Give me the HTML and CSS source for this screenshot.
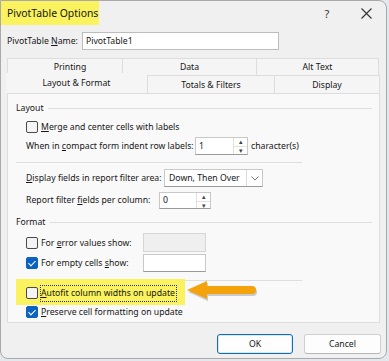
FILE: index.html
```html
<!DOCTYPE html>
<html lang="en">
<head>
  <meta charset="UTF-8" />
  <title>PivotTable Options</title>
  <link rel="stylesheet" href="styles.css">
</head>
<body>

  <div class="dialog">

    <!-- Title bar -->
    <div class="titlebar">
      <span class="title hl">PivotTable Options</span>
      <span class="help">?</span>
      <span class="close">
        <svg width="11" height="11" viewBox="0 0 11 11"><path d="M0.5 0.5 L10.5 10.5 M10.5 0.5 L0.5 10.5" stroke="#333" stroke-width="1.1" fill="none"/></svg>
      </span>
    </div>

    <!-- Name -->
    <div class="name-row">
      <span>PivotTable <u>N</u>ame:</span>
      <div class="field name-box">PivotTable1</div>
    </div>

    <!-- Tabs -->
    <div class="tabs">
      <div class="tab-row">
        <div class="tab w-print">Printing</div>
        <div class="tab w-data">Data</div>
        <div class="tab w-alt">Alt Text</div>
      </div>
      <div class="tab-row">
        <div class="tab active hl">Layout &amp; Format</div>
        <div class="tab w-totals">Totals &amp; Filters</div>
        <div class="tab w-display">Display</div>
      </div>
    </div>

    <!-- Panel -->
    <div class="panel">
      <div class="group-head"><span>Layout</span><span class="rule"></span></div>

      <div class="row r-merge">
        <span class="check"></span>
        <span><u>M</u>erge and center cells with labels</span>
      </div>

      <div class="row r-compact">
        <span class="lbl-compact">When in <u>c</u>ompact form indent row labels:</span>
        <div class="field spin w-indent">
          <span class="val">1</span>
          <span class="spin-btns"><span class="up">&#9652;</span><span class="down">&#9662;</span></span>
        </div>
        <span>character(s)</span>
      </div>

      <div class="sep"></div>

      <div class="row r-display">
        <span class="lbl-display"><u>D</u>isplay fields in report filter area:</span>
        <div class="field combo">
          <span class="val">Down, Then Over</span>
          <span class="chev">
            <svg width="8" height="5" viewBox="0 0 8 5"><path d="M0.5 0.5 L4 4 L7.5 0.5" stroke="#777" fill="none"/></svg>
          </span>
        </div>
      </div>

      <div class="row r-report">
        <span class="lbl-report">Report filter <u>f</u>ields per column:</span>
        <div class="field spin w-perco">
          <span class="val">0</span>
          <span class="spin-btns"><span class="up">&#9652;</span><span class="down">&#9662;</span></span>
        </div>
      </div>

      <div class="group-head g-format"><span>Format</span><span class="rule"></span></div>

      <div class="row r-error">
        <span class="check"></span>
        <span class="opt-label">For <u>e</u>rror values show:</span>
        <div class="field box disabled"></div>
      </div>

      <div class="row r-empty">
        <span class="check on"></span>
        <span class="opt-label">For empty cells <u>s</u>how:</span>
        <div class="field box"></div>
      </div>

      <div class="sep s-lower"></div>

      <div class="row r-autofit">
        <div class="hl autofit">
          <span class="check"></span>
          <span class="focus"><u>A</u>utofit column widths on update</span>
        </div>
        <svg class="arrow" width="72" height="26" viewBox="0 0 72 26">
          <g fill="#000" opacity="0.18" transform="translate(1,2)">
            <path d="M1 12 L21 3 L21 21 Z"/>
            <path d="M18 12 L66 12" stroke="#000" stroke-width="8" stroke-linecap="round"/>
          </g>
          <g fill="#f4a30c">
            <path d="M1 12 L21 3 L21 21 Z"/>
            <path d="M18 12 L66 12" stroke="#f4a30c" stroke-width="8" stroke-linecap="round"/>
          </g>
        </svg>
      </div>

      <div class="row r-preserve">
        <span class="check on"></span>
        <span><u>P</u>reserve cell formatting on update</span>
      </div>
    </div>

    <!-- Buttons -->
    <div class="buttons">
      <div class="btn default">OK</div>
      <div class="btn">Cancel</div>
    </div>

  </div>

</body>
</html>
```

FILE: styles.css
```css
/* General */
body {
  margin: 0;
  background: #e4e8ec;
  font-family: "Noto Sans", "Open Sans", sans-serif;
  font-size: 8.7px;
  color: #161616;
}

u {
  text-decoration: underline;
  text-underline-offset: 1px;
}

.hl {
  background: #faf25e;
}

.dialog {
  width: 385px;
  height: 357px;
  border: 1px solid #a9a9a9;
  border-radius: 0 8px 8px 8px;
  background: #f0f0f0;
  overflow: hidden;
  white-space: nowrap;
}

/* Title bar */
.titlebar {
  height: 24px;
  display: flex;
  align-items: stretch;
}

.title {
  display: flex;
  align-items: center;
  box-sizing: border-box;
  padding-left: 6px;
  width: 98px;
  margin-top: -1px;
  font-size: 10.4px;
}

.help {
  margin-left: auto;
  width: 14px;
  display: flex;
  align-items: center;
  justify-content: center;
  font-size: 11px;
  color: #333;
}

.close {
  width: 14px;
  margin: 0 13px 0 25px;
  display: flex;
  align-items: center;
  justify-content: center;
}

/* Name row */
.name-row {
  display: flex;
  align-items: center;
  margin: 7px 0 0 6px;
  height: 18px;
  gap: 4px;
}

.field {
  box-sizing: border-box;
  background: #fff;
  border: 1px solid #c8c8c8;
  border-bottom-color: #9a9a9a;
  display: flex;
  align-items: center;
}

.name-box {
  width: 197px;
  height: 18px;
  padding-left: 3px;
  border-color: #bdbdbd;
}

/* Tabs */
.tabs {
  margin: 8px 0 0 6px;
  width: 373px;
}

.tab-row {
  display: flex;
  height: 17px;
}

.tab-row + .tab-row {
  height: 18px;
}

.tab {
  box-sizing: border-box;
  display: flex;
  align-items: center;
  justify-content: center;
  background: #f5f5f5;
  border: 1px solid #dddddd;
  border-bottom: none;
  margin-right: -1px;
}

.w-print { width: 116px; padding-left: 10px; }
.w-data { width: 135px; }
.w-alt { width: 123px; }
.w-totals { width: 128px; }
.w-display { width: 106px; }

.tab.active {
  position: relative;
  z-index: 1;
  width: 141px;
  height: 20px;
  margin: -2px 0 0 -1px;
  border: none;
}

/* Panel */
.panel {
  box-sizing: border-box;
  width: 373px;
  height: 230px;
  margin-left: 6px;
  padding-top: 6px;
  background: #f9f9f9;
  border: 1px solid #dddddd;
}

.group-head {
  display: flex;
  align-items: center;
  height: 16px;
  margin-left: 8px;
  gap: 4px;
}

.rule {
  flex: 1;
  height: 1px;
  margin-right: 7px;
  background: #dedede;
}

.g-format {
  margin-top: 5px;
}

.row {
  display: flex;
  align-items: center;
  margin-left: 18px;
  gap: 3px;
}

.r-merge { height: 16px; margin-top: 3px; }
.r-compact { height: 18px; margin-top: 2px; }
.r-display { height: 18px; }
.r-report { height: 18px; margin-top: 4px; }
.r-error { height: 19px; margin-top: 3px; }
.r-empty { height: 18px; margin-top: 2px; }

.lbl-compact { width: 166px; }
.lbl-display { width: 135px; }
.lbl-report { width: 130px; }

.sep {
  height: 1px;
  background: #dedede;
  margin: 7px 0 6px 8px;
  width: 286px;
}

.s-lower {
  margin: 8px 0 0 8px;
}

.opt-label {
  width: 99px;
}

/* Checkboxes */
.check {
  box-sizing: border-box;
  width: 12px;
  height: 12px;
  border: 1px solid #4a4a4a;
  border-radius: 2px;
  background: #f4f4f4;
  position: relative;
}

.check.on {
  background: #0b62c0;
  border-color: #0b62c0;
}

.check.on::after {
  content: "";
  position: absolute;
  left: 3px;
  top: 1px;
  width: 3px;
  height: 6px;
  border: solid #fff;
  border-width: 0 1px 1px 0;
  transform: rotate(45deg);
}

/* Inputs */
.spin {
  height: 18px;
  padding-left: 3px;
  justify-content: space-between;
}

.w-indent { width: 53px; }
.w-perco { width: 52px; height: 17px; }

.spin-btns {
  display: flex;
  flex-direction: column;
  align-self: stretch;
  width: 13px;
  border-left: 1px solid #e0e0e0;
  font-size: 7px;
  line-height: 8px;
  color: #444;
  text-align: center;
}

.spin-btns span {
  flex: 1;
}

.spin-btns .up {
  border-bottom: 1px solid #e0e0e0;
}

.combo {
  width: 99px;
  height: 18px;
  padding-left: 4px;
  justify-content: space-between;
}

.chev {
  align-self: stretch;
  width: 15px;
  border-left: 1px solid #dcdcdc;
  display: flex;
  align-items: center;
  justify-content: center;
}

.box {
  width: 63px;
  height: 19px;
}

.r-empty .box { height: 18px; }

.box.disabled {
  background: #efefef;
  border-color: #d6d6d6;
}

/* Annotation row */
.r-autofit {
  margin: -2px 0 0 8px;
  height: 26px;
  gap: 0;
}

.autofit {
  display: flex;
  align-items: center;
  gap: 3px;
  height: 26px;
  width: 159px;
  padding-left: 10px;
}

.autofit .check {
  margin-top: 2px;
}

.focus {
  outline: 1px dotted #333;
  outline-offset: 0;
  margin-top: 2px;
  padding: 1px 1px 2px 0;
}

.arrow {
  margin: -2px 0 0 1px;
}

.r-preserve {
  height: 14px;
  margin-top: 0;
}

/* Buttons */
.buttons {
  display: flex;
  justify-content: flex-end;
  gap: 11px;
  margin: 11px 5px 0 0;
}

.btn {
  box-sizing: border-box;
  width: 77px;
  height: 20px;
  display: flex;
  align-items: center;
  justify-content: center;
  background: #fdfdfd;
  border: 1px solid #d0d0d0;
  border-bottom-color: #b8b8b8;
  border-radius: 3px;
}

.btn.default {
  width: 76px;
  border: 1px solid #0f6cbd;
  box-shadow: inset 0 0 0 1px #dbe8f6;
}
```
